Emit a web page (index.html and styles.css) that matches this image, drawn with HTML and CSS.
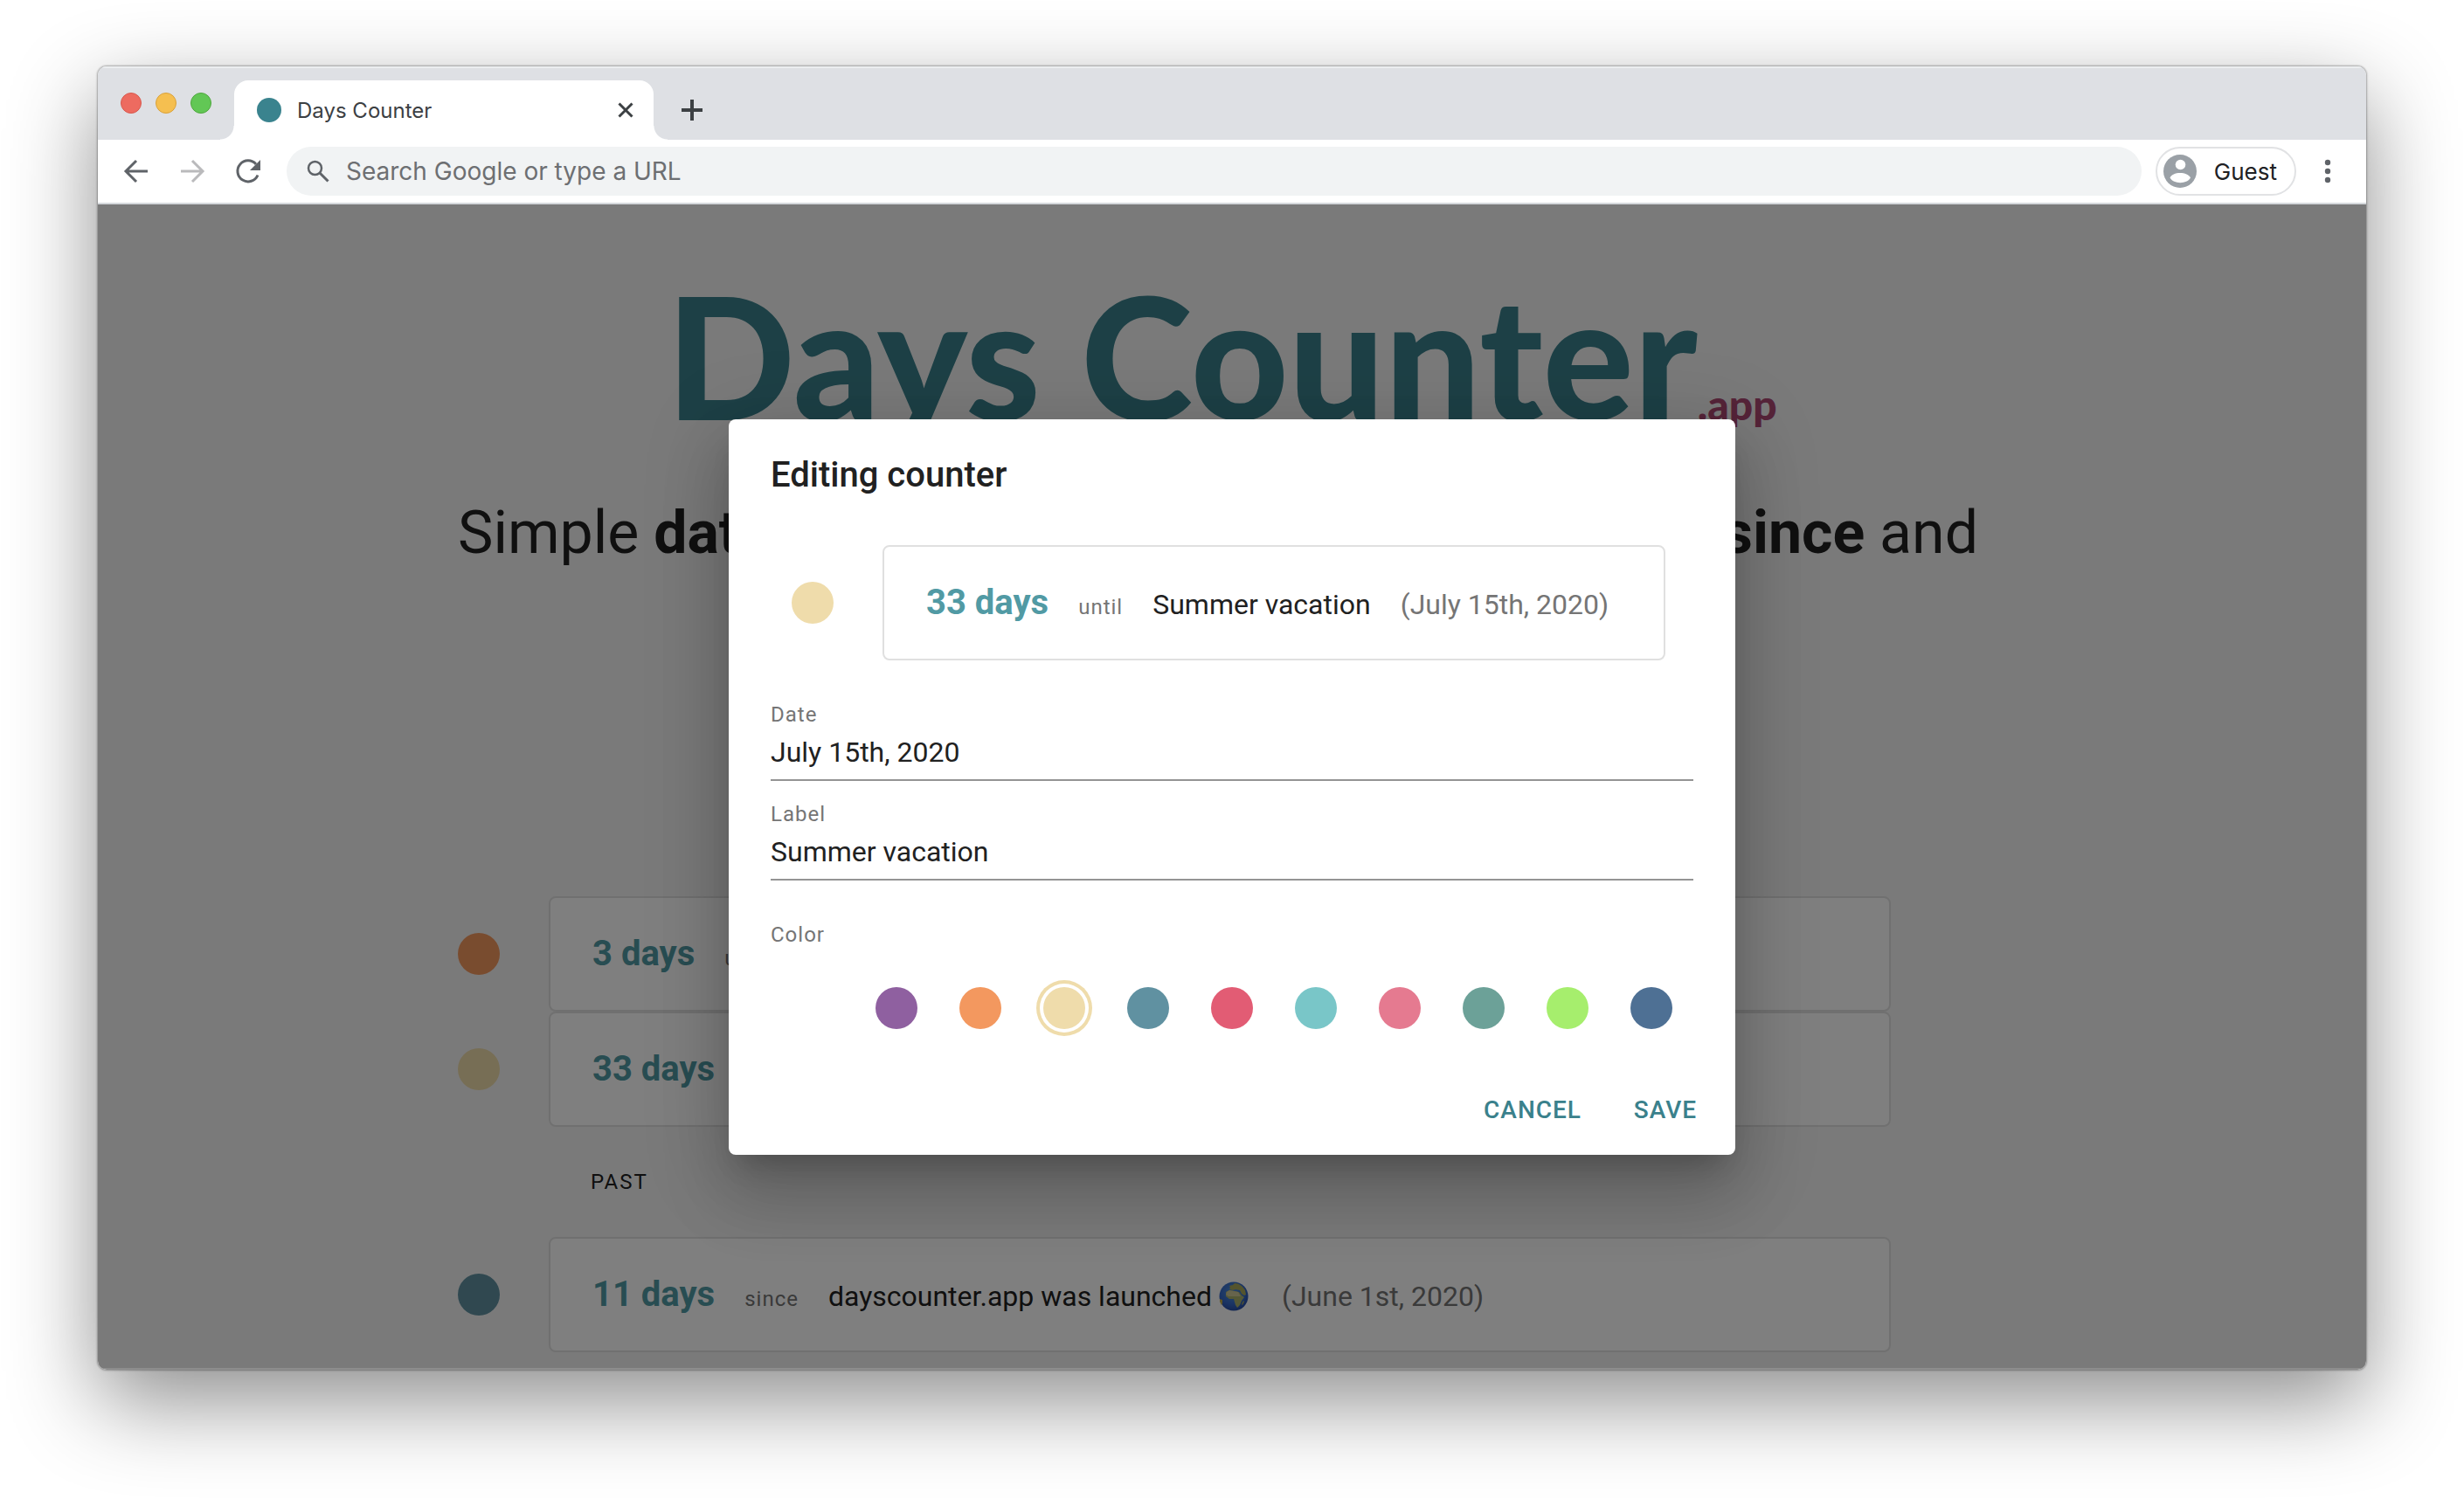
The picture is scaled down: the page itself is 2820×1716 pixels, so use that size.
FILE: index.html
```html
<!DOCTYPE html>
<html lang="en">
<head>
<meta charset="utf-8">
<meta name="viewport" content="width=device-width, initial-scale=1">
<title>Days Counter</title>
<link rel="stylesheet" href="styles.css">
</head>
<body>
<div class="window">
  <header class="tab-strip">
    <div class="lights">
      <button class="light light-close" aria-label="Close window"></button>
      <button class="light light-minimize" aria-label="Minimize window"></button>
      <button class="light light-zoom" aria-label="Zoom window"></button>
    </div>
    <div class="tab">
      <span class="favicon"></span>
      <span class="tab-title">Days Counter</span>
      <button class="icon-button tab-close" aria-label="Close tab">
        <svg width="20" height="20" viewBox="0 0 20 20"><path d="M2.500 2.500 17.500 17.500M17.500 2.500 2.500 17.500" fill="none" stroke="#3c4043" stroke-width="3"/></svg>
      </button>
    </div>
    <button class="icon-button new-tab" aria-label="New tab">
      <svg width="26" height="26" viewBox="0 0 26 26"><path d="M13 1v24M1 13h24" fill="none" stroke="#3c4043" stroke-width="4"/></svg>
    </button>
  </header>

  <nav class="toolbar" aria-label="Browser">
    <div class="nav-buttons">
      <button class="icon-button" aria-label="Back">
        <svg width="32" height="32" viewBox="0 0 32 32"><path d="M29 16H4M16 4 4 16l12 12" fill="none" stroke="#5f6368" stroke-width="3"/></svg>
      </button>
      <button class="icon-button" aria-label="Forward" disabled>
        <svg width="32" height="32" viewBox="0 0 32 32"><path d="M3 16h25M16 4l12 12-12 12" fill="none" stroke="#bababc" stroke-width="3"/></svg>
      </button>
      <button class="icon-button" aria-label="Reload">
        <svg width="32" height="32" viewBox="0 0 32 32"><path d="M27 20.500A12 12 0 1 1 25 8" fill="none" stroke="#5f6368" stroke-width="3"/><path d="M30 3v12H18z" fill="#5f6368"/></svg>
      </button>
    </div>
    <label class="address">
      <svg width="28" height="28" viewBox="0 0 28 28"><circle cx="10.500" cy="10.500" r="7.500" fill="none" stroke="#5f6368" stroke-width="2.500"/><path d="m16 16 9.500 9.500" stroke="#5f6368" stroke-width="3"/></svg>
      <input type="text" placeholder="Search Google or type a URL" aria-label="Address">
    </label>
    <button class="profile">
      <svg width="38" height="38" viewBox="0 0 38 38"><circle cx="19" cy="19" r="19" fill="#9aa0a6"/><circle cx="19.500" cy="11.500" r="5.800" fill="#fff"/><path d="M7.500 26.500c2.500-7.500 20.500-7.500 23.500 0-4 7.500-19.500 7.500-23.500 0z" fill="#fff"/></svg>
      Guest
    </button>
    <button class="icon-button menu" aria-label="Menu">
      <svg width="8" height="28" viewBox="0 0 8 28"><g fill="#5f6368"><circle cx="4" cy="4" r="3.200"/><circle cx="4" cy="14" r="3.200"/><circle cx="4" cy="24" r="3.200"/></g></svg>
    </button>
  </nav>

  <div class="viewport">
    <main class="page">
      <h1 class="logo">Days Counter<small class="logo-suffix">.app</small></h1>
      <div class="tagline">
        <span>Simple <b>date counter</b></span>
        <span>days <b>since</b> and</span>
      </div>

      <ul class="list">
        <li class="counter">
          <span class="dot dot-orange"></span>
          <div class="card">
            <b class="days">3 days</b><span class="relation">until</span><span>Weekend</span><span class="date">(June 15th, 2020)</span>
          </div>
        </li>
        <li class="counter">
          <span class="dot dot-sand"></span>
          <div class="card">
            <b class="days">33 days</b><span class="relation">until</span><span>Summer vacation</span><span class="date">(July 15th, 2020)</span>
          </div>
        </li>
      </ul>
      <h2 class="section">PAST</h2>
      <ul class="list">
        <li class="counter">
          <span class="dot dot-steel"></span>
          <div class="card">
            <b class="days">11 days</b><span class="relation">since</span><span class="event">dayscounter.app was launched
              <svg class="globe" width="34" height="34" viewBox="0 0 34 34" role="img" aria-label="Globe">
                <defs><radialGradient id="sea" cx="45%" cy="35%" r="70%"><stop offset="0" stop-color="#4f8fd8"/><stop offset=".6" stop-color="#3569c8"/><stop offset="1" stop-color="#24479c"/></radialGradient></defs>
                <circle cx="17" cy="17" r="16.500" fill="url(#sea)"/>
                <path d="M12 5l4-1 2-2c5 0 9 3 12 8l1 5-2 1-3-2-2-4-5-1-3 1-4-1 1-2z" fill="#a9a95a"/>
                <path d="M8 12l4-2 6 1 5 1 3 4 3 2-3 4-2 5-3 3-2-3-2-7-5 0-4-3z" fill="#a8b06c"/>
                <path d="M9 12l3-2 10 2 3 5-14 0-3-2z" fill="#cfc898"/>
                <path d="M28 22l1 1-2 4-1-1z" fill="#a9a95a"/>
                <path d="M1 20l3 1v4l-1 2-2-4z" fill="#c3ac48"/>
              </svg></span><span class="date">(June 1st, 2020)</span>
          </div>
        </li>
      </ul>
    </main>

    <div class="backdrop">
      <form class="dialog" role="dialog" aria-labelledby="dialog-title">
        <div class="dialog-body">
          <h2 class="dialog-title" id="dialog-title">Editing counter</h2>
          <div class="counter preview">
            <span class="dot dot-sand"></span>
            <div class="card">
              <b class="days">33 days</b><span class="relation">until</span><span>Summer vacation</span><span class="date">(July 15th, 2020)</span>
            </div>
          </div>
          <div class="field">
            <label for="date">Date</label>
            <input id="date" type="text" value="July 15th, 2020">
          </div>
          <div class="field">
            <label for="label">Label</label>
            <input id="label" type="text" value="Summer vacation">
          </div>
          <fieldset class="colors">
            <legend>Color</legend>
            <div class="swatches">
              <input class="dot dot-purple" type="radio" name="color" aria-label="Purple">
              <input class="dot dot-orange" type="radio" name="color" aria-label="Orange">
              <input class="dot dot-sand" type="radio" name="color" aria-label="Sand" checked>
              <input class="dot dot-steel" type="radio" name="color" aria-label="Steel">
              <input class="dot dot-red" type="radio" name="color" aria-label="Red">
              <input class="dot dot-aqua" type="radio" name="color" aria-label="Aqua">
              <input class="dot dot-pink" type="radio" name="color" aria-label="Pink">
              <input class="dot dot-sage" type="radio" name="color" aria-label="Sage">
              <input class="dot dot-lime" type="radio" name="color" aria-label="Lime">
              <input class="dot dot-navy" type="radio" name="color" aria-label="Navy">
            </div>
          </fieldset>
        </div>
        <div class="actions">
          <button type="button">CANCEL</button>
          <button type="submit">SAVE</button>
        </div>
      </form>
    </div>
  </div>
</div>
</body>
</html>
```

FILE: styles.css
```css
* {
  box-sizing: border-box;
}

body {
  display: flex;
  min-height: 100vh;
  margin: 0;
  padding: 76px 112px 148px;
  background: #fff;
  color: #212121;
  font-family: Roboto, sans-serif;
}

button,
input {
  font: inherit;
}

button {
  padding: 0;
  border: 0;
  background: none;
}

svg {
  display: block;
  flex: none;
}

h1,
h2,
ul {
  margin: 0;
  padding: 0;
  font-weight: 400;
  list-style: none;
}

/* Browser window */

.window {
  display: flex;
  flex: 1;
  flex-direction: column;
  min-width: 0;
  overflow: hidden;
  border-radius: 10px;
  background: #fff;
  box-shadow: 0 0 2px 1px rgba(0, 0, 0, 0.3), 0 36px 100px rgba(0, 0, 0, 0.45);
}

.tab-strip {
  display: flex;
  align-items: flex-end;
  height: 84px;
  background: #dee0e4;
  box-shadow: inset 0 2px #eceef0;
  font-family: Inter, sans-serif;
}

.lights {
  display: flex;
  align-self: center;
  gap: 16px;
  padding: 0 26px;
}

.light {
  width: 24px;
  height: 24px;
  border: 1px solid;
  border-radius: 50%;
}

.light-close {
  border-color: #d8584d;
  background: #ed6b60;
}

.light-minimize {
  border-color: #d9a13a;
  background: #f5bf50;
}

.light-zoom {
  border-color: #4fa73e;
  background: #62c755;
}

.tab {
  position: relative;
  display: flex;
  align-items: center;
  width: 480px;
  height: 68px;
  padding: 0 22px 0 26px;
  border-radius: 16px 16px 0 0;
  background: #fff;
  color: #3c4043;
  font-size: 24px;
}

.tab::before,
.tab::after {
  content: "";
  position: absolute;
  bottom: 0;
  width: 16px;
  height: 16px;
}

.tab::before {
  right: 100%;
  background: radial-gradient(circle at 0 0, transparent 15px, #fff 16px);
}

.tab::after {
  left: 100%;
  background: radial-gradient(circle at 100% 0, transparent 15px, #fff 16px);
}

.favicon {
  width: 28px;
  height: 28px;
  margin-right: 18px;
  border-radius: 50%;
  background: #3a838e;
}

.tab-title {
  flex: 1;
}

.icon-button {
  display: grid;
  place-items: center;
}

.new-tab {
  height: 68px;
  margin-left: 31px;
}

.toolbar {
  display: flex;
  align-items: center;
  height: 74px;
  padding: 0 40px 0 28px;
  border-bottom: 2px solid #d5d8dc;
  font-family: Inter, sans-serif;
  font-size: 28px;
}

.nav-buttons {
  display: flex;
  gap: 32px;
}

.address {
  display: flex;
  flex: 1;
  align-items: center;
  gap: 18px;
  height: 56px;
  margin: 0 16px 0 28px;
  padding: 0 22px;
  border-radius: 28px;
  background: #f1f3f4;
}

.address input {
  flex: 1;
  min-width: 0;
  padding: 0;
  border: 0;
  background: none;
}

.address input::placeholder {
  color: #6d6f72;
  opacity: 1;
}

.profile {
  display: flex;
  align-items: center;
  gap: 20px;
  height: 56px;
  padding: 0 20px 0 7px;
  border: 2px solid #e1e2e4;
  border-radius: 28px;
  color: #202124;
  font-size: 26px;
}

.menu {
  margin-left: 32px;
}

/* Days Counter page */

.viewport {
  position: relative;
  display: flex;
  flex: 1;
  justify-content: center;
  background: #f5f5f5;
}

.page {
  width: 100%;
  max-width: 1772px;
  padding-top: 72px;
}

.logo {
  padding-right: 24px;
  color: #3a818c;
  font-family: Lato, sans-serif;
  font-size: 194px;
  font-weight: 900;
  line-height: 200px;
  text-align: center;
  white-space: nowrap;
}

.logo-suffix {
  color: #ad4873;
  font-size: 48px;
  line-height: 48px;
}

.tagline {
  display: flex;
  justify-content: space-between;
  margin: 64px 32px 376px 0;
  font-size: 68px;
  line-height: 80px;
}

.list {
  padding-right: 132px;
}

.counter {
  display: flex;
  align-items: center;
  gap: 56px;
}

.dot {
  flex: none;
  width: 48px;
  height: 48px;
  border-radius: 50%;
}

.dot-purple { background: #8f60a0; color: #8f60a0; }
.dot-orange { background: #f3985f; color: #f3985f; }
.dot-sand { background: #efdcab; color: #efdcab; }
.dot-steel { background: #6091a1; color: #6091a1; }
.dot-red { background: #e25c74; color: #e25c74; }
.dot-aqua { background: #79c6c8; color: #79c6c8; }
.dot-pink { background: #e57a90; color: #e57a90; }
.dot-sage { background: #6ca198; color: #6ca198; }
.dot-lime { background: #a6ee6d; color: #a6ee6d; }
.dot-navy { background: #4e7094; color: #4e7094; }

.card {
  display: flex;
  flex: 1;
  align-items: baseline;
  gap: 34px;
  height: 132px;
  padding: 0 48px;
  border: 2px solid #e0e0e0;
  border-radius: 8px;
  background: #fff;
  font-size: 32px;
  line-height: 128px;
  white-space: nowrap;
}

.days {
  color: #519aa4;
  font-size: 40px;
}

.relation {
  color: #757575;
  font-size: 24px;
}

.date {
  color: #757575;
}

.event {
  display: flex;
  align-items: center;
  gap: 8px;
}

.globe {
  margin-right: 4px;
}

.section {
  padding-left: 152px;
  font-size: 24px;
  line-height: 126px;
  letter-spacing: 2px;
}

/* Edit dialog */

.backdrop {
  position: absolute;
  inset: 0;
  display: grid;
  place-items: center;
  background: rgba(0, 0, 0, 0.5);
  box-shadow: inset 0 -2px rgba(255, 255, 255, 0.15);
}

.dialog {
  width: 1152px;
  max-width: 100%;
  border-radius: 8px;
  background: #fff;
  box-shadow:
    0 22px 30px -14px rgba(0, 0, 0, 0.2),
    0 48px 76px 6px rgba(0, 0, 0, 0.14),
    0 18px 92px 16px rgba(0, 0, 0, 0.12);
}

.dialog-body {
  padding: 32px 48px 40px;
}

.dialog-title {
  font-size: 40px;
  font-weight: 500;
  line-height: 64px;
}

.preview {
  padding: 48px 32px 48px 24px;
}

.field {
  display: flex;
  flex-direction: column;
  margin-bottom: 24px;
}

.field label,
.colors legend {
  padding: 0;
  color: #757575;
  font-size: 24px;
  line-height: 28px;
}

.relation,
.field label,
.colors legend,
.actions button {
  letter-spacing: 1px;
}

.field input {
  height: 62px;
  padding: 0 0 2px;
  border: 0;
  border-bottom: 2px solid #949494;
  background: none;
  color: #212121;
  font-size: 32px;
}

.colors {
  margin: 48px 0 0;
  padding: 0;
  border: 0;
}

.swatches {
  display: flex;
  justify-content: flex-end;
  gap: 48px;
  padding: 46px 24px 0 0;
}

.swatches .dot {
  appearance: none;
  margin: 0;
}

.swatches .dot:checked {
  box-shadow: 0 0 0 4px #fff, 0 0 0 8px currentColor;
}

.actions {
  display: flex;
  justify-content: flex-end;
  gap: 16px;
  padding: 16px;
}

.actions button {
  min-width: 128px;
  height: 72px;
  padding: 0 16px;
  color: #3a818c;
  font-size: 28px;
  font-weight: 500;
}
```
